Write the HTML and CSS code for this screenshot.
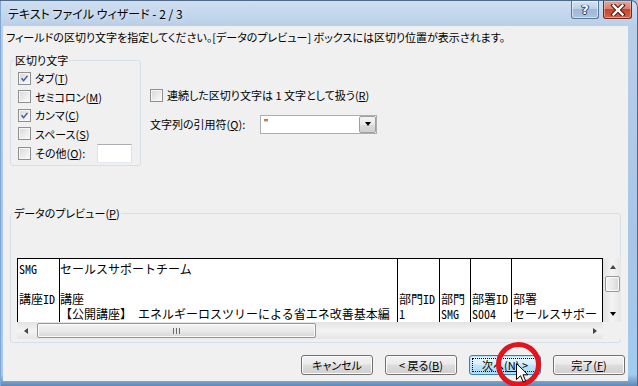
FILE: index.html
```html
<!DOCTYPE html>
<html lang="ja">
<head>
    <meta charset="UTF-8">
    <title>テキスト ファイル ウィザード - 2 / 3</title>
    <link rel="stylesheet" href="styles.css">
</head>
<body>
<div class="window">
    <div class="titlebar">
        <span class="title">テキスト ファイル ウィザード - 2 / 3</span>
        <div class="caption-buttons">
            <span class="cap-btn help">?</span>
            <span class="cap-btn close">
                <svg width="16" height="12" viewBox="0 0 16 12">
                    <path d="M3.5 1.5 L12.5 10.5 M12.5 1.5 L3.5 10.5" stroke="#4a1a12" stroke-width="4.4" stroke-linecap="square" fill="none"/>
                    <path d="M3.5 1.5 L12.5 10.5 M12.5 1.5 L3.5 10.5" stroke="#fff" stroke-width="2.4" stroke-linecap="square" fill="none"/>
                </svg>
            </span>
        </div>
    </div>

    <div class="client">
        <p class="intro">フィールドの区切り文字を指定してください。[データのプレビュー] ボックスには区切り位置が表示されます。</p>

        <div class="upper">
            <fieldset class="group delims">
                <legend>区切り文字</legend>
                <label class="check-row"><span class="check on"><svg viewBox="0 0 13 13"><path d="M3 6.3 L5.4 9 L10 3.4" stroke="#3d58a0" stroke-width="1.7" fill="none"/></svg></span>タブ(<u>T</u>)</label>
                <label class="check-row"><span class="check"></span>セミコロン(<u>M</u>)</label>
                <label class="check-row"><span class="check on"><svg viewBox="0 0 13 13"><path d="M3 6.3 L5.4 9 L10 3.4" stroke="#3d58a0" stroke-width="1.7" fill="none"/></svg></span>カンマ(<u>C</u>)</label>
                <label class="check-row"><span class="check"></span>スペース(<u>S</u>)</label>
                <label class="check-row other"><span class="check"></span>その他(<u>O</u>):<span class="textbox"></span></label>
            </fieldset>

            <div class="options">
                <label class="check-row"><span class="check"></span>連続した区切り文字は 1 文字として扱う(<u>R</u>)</label>
                <div class="quote-row">
                    <span class="quote-label">文字列の引用符(<u>Q</u>):</span>
                    <span class="combo">
                        <span class="combo-value">"</span>
                        <span class="combo-drop"><span class="tri-down"></span></span>
                    </span>
                </div>
            </div>
        </div>

        <fieldset class="group preview">
            <legend>データのプレビュー(<u>P</u>)</legend>
            <div class="preview-box">
                <div class="data-wrap">
                    <div class="data">
                        <div class="col c1"><div>SMG</div><div></div><div>講座ID</div><div></div></div>
                        <div class="col c2"><div>セールスサポートチーム</div><div></div><div>講座</div><div>【公開講座】　エネルギーロスツリーによる省エネ改善基本編</div></div>
                        <div class="col c3"><div></div><div></div><div>部門ID</div><div>1</div></div>
                        <div class="col c4"><div></div><div></div><div>部門</div><div>SMG</div></div>
                        <div class="col c5"><div></div><div></div><div>部署ID</div><div>S004</div></div>
                        <div class="col c6"><div></div><div></div><div>部署</div><div>セールスサポー</div></div>
                    </div>
                    <div class="vscroll">
                        <span class="sb-btn"><span class="tri-up"></span></span>
                        <span class="vthumb"></span>
                        <span class="sb-track"></span>
                        <span class="sb-btn"><span class="tri-down"></span></span>
                    </div>
                </div>
                <div class="hscroll-row">
                    <div class="hscroll">
                        <span class="sb-btn"><span class="tri-left"></span></span>
                        <span class="hthumb"><span class="grip"></span></span>
                        <span class="sb-track"></span>
                        <span class="sb-btn"><span class="tri-right"></span></span>
                    </div>
                    <div class="corner"></div>
                </div>
            </div>
        </fieldset>

        <div class="buttons">
            <span class="btn">キャンセル</span>
            <span class="btn">&lt; 戻る(<u>B</u>)</span>
            <span class="btn default"><span class="focus">次へ(<u>N</u>) &gt;</span></span>
            <span class="btn">完了(<u>F</u>)</span>
        </div>
    </div>

    <div class="highlight"></div>
    <svg class="cursor" width="13" height="20" viewBox="0 0 13 20">
        <path d="M0.5 0.5 L0.5 16.5 L4.5 12.7 L7.2 18.8 L9.6 17.8 L7 11.8 L12 11.8 Z" fill="#fff" stroke="#000" stroke-width="1" stroke-linejoin="miter"/>
    </svg>
</div>
</body>
</html>
```

FILE: styles.css
```css
* {
    box-sizing: border-box;
}
html, body {
    margin: 0;
    padding: 0;
}
body {
    width: 638px;
    height: 386px;
    overflow: hidden;
    font-family: "Noto Sans CJK JP", "Noto Sans", sans-serif;
    font-size: 11px;
    font-feature-settings: "palt";
    color: #000;
    background: #a9c4e3;
}
u {
    text-decoration: underline;
    text-underline-offset: 1px;
}

/* window frame */
.window {
    position: relative;
    width: 638px;
    height: 386px;
    display: flex;
    flex-direction: column;
    padding: 0 10px 5px 3px;
    border-top: 1px solid #4e6a8a;
    border-right: 1px solid #4e6a8a;
    border-top-right-radius: 7px;
    background: linear-gradient(to bottom, #cfdef0 0, #b9cfe8 25px, #a9c5e6 60%, #a2cbee 97%, #5e88b4 100%);
    box-shadow: inset 1px 0 0 #7fa5d3;
}
.titlebar {
    height: 25px;
    display: flex;
    align-items: flex-start;
}
.title {
    padding: 5px 0 0 5px;
    line-height: 16px;
    font-size: 12px;
    text-shadow: 0 0 6px rgba(255, 255, 255, 0.8);
}
.caption-buttons {
    margin-left: auto;
    margin-right: -5px;
    display: flex;
    gap: 4px;
}
.cap-btn {
    height: 18px;
    display: flex;
    align-items: center;
    justify-content: center;
    border: 1px solid #5b7594;
    border-top: none;
    border-radius: 0 0 3px 3px;
}
.help {
    width: 28px;
    background: linear-gradient(to bottom, #d7e4f2 0%, #bcd0e6 45%, #9fb8d6 50%, #a9c3e0 100%);
    box-shadow: inset 0 0 0 1px rgba(255, 255, 255, 0.5);
    color: #fff;
    font-family: "DejaVu Sans", sans-serif;
    font-weight: bold;
    font-size: 13px;
    text-shadow: 0 0 1px #233b5a, 1px 0 0 #233b5a, -1px 0 0 #233b5a, 0 1px 0 #233b5a;
}
.close {
    width: 29px;
    border-color: #6d2a20;
    background: linear-gradient(to bottom, #e7a596 0%, #d9806d 45%, #c4452e 50%, #d3644a 100%);
    box-shadow: inset 0 0 0 1px rgba(255, 220, 210, 0.45);
}

/* client area */
.client {
    flex: 1;
    display: flex;
    flex-direction: column;
    background: #f0f0f0;
    padding: 0 2px 0 0;
    box-shadow: 1px 0 0 #eaf2fb;
}
.intro {
    margin: 0;
    padding: 4px 0 0 3px;
    line-height: 14px;
    white-space: nowrap;
}
.upper {
    display: flex;
    margin: 9px 0 0 7px;
}

.group {
    margin: 0;
    border: 1px solid #d5dfe5;
    border-radius: 3px;
    min-width: 0;
}
.group legend {
    padding: 0 1px;
    margin-left: -4px;
    line-height: 14px;
}
.delims {
    width: 131px;
    padding: 2px 8px 2px 7px;
}
.check-row {
    display: flex;
    align-items: center;
    height: 18.5px;
    white-space: nowrap;
}
.check-row.other {
    height: 20px;
}
.check {
    flex: none;
    width: 13px;
    height: 13px;
    margin-right: 4px;
    border: 1px solid #8e8f8f;
    background: linear-gradient(135deg, #d6d6d6 0%, #ececec 55%, #fbfbfb 100%);
    box-shadow: inset 0 0 0 1px #f6f6f6;
}
.check svg {
    display: block;
    width: 11px;
    height: 11px;
}
.textbox {
    margin-left: auto;
    width: 35px;
    height: 19px;
    background: #fff;
    border: 1px solid #abadb3;
    border-color: #abadb3 #dbdfe6 #e3e9ef #e2e3ea;
}

.options {
    margin: 33px 0 0 9px;
}
.quote-row {
    display: flex;
    align-items: center;
    margin-top: 10px;
    height: 19px;
}
.quote-label {
    width: 110px;
}
.combo {
    width: 117px;
    height: 19px;
    display: flex;
    background: #fff;
    border: 1px solid #abadb3;
}
.combo-value {
    flex: 1;
    padding-left: 3px;
    line-height: 14px;
    font-family: "Liberation Sans", sans-serif;
    font-size: 11px;
}
.combo-drop {
    width: 17px;
    display: flex;
    align-items: center;
    justify-content: center;
    border: 1px solid #a0a0a0;
    border-radius: 2px;
    background: linear-gradient(to bottom, #f4f4f4 0%, #e8e8e8 50%, #dcdcdc 51%, #d0d0d0 100%);
}

.tri-down, .tri-up, .tri-left, .tri-right {
    width: 0;
    height: 0;
    border-style: solid;
    border-color: transparent;
}
.tri-down {
    border-width: 4px 3.5px 0 3.5px;
    border-top-color: #000;
}
.tri-up {
    border-width: 0 3.5px 4px 3.5px;
    border-bottom-color: #444;
}
.tri-left {
    border-width: 3.5px 4px 3.5px 0;
    border-right-color: #444;
}
.tri-right {
    border-width: 3.5px 0 3.5px 4px;
    border-left-color: #444;
}

/* preview */
.preview {
    margin: 40px 4px 0 7px;
    padding: 38px 2px 3px 6px;
}
.preview-box {
    width: 604px;
    display: flex;
    flex-direction: column;
}
.data-wrap {
    display: flex;
    height: 64px;
}
.data {
    width: 586px;
    display: flex;
    padding-top: 2px;
    background: #fff;
    border: 1px solid #000;
    border-bottom: none;
    overflow: hidden;
    font-size: 12px;
    font-feature-settings: "hwid";
    line-height: 15px;
    white-space: nowrap;
}
.col {
    flex: none;
    border-right: 1px solid #000;
    margin-top: -2px;
    padding-top: 2px;
}
.col div {
    height: 15px;
    padding-left: 1px;
}
.c1 { width: 42px; }
.c2 { width: 338px; }
.c2 div { padding-left: 0; }
.c3 { width: 42px; }
.c4 { width: 31px; }
.c5 { width: 41px; }
.c6 { flex: 1; border-right: none; }

.vscroll {
    width: 18px;
    display: flex;
    flex-direction: column;
    background: linear-gradient(to right, #e3e3e3, #f3f3f3 50%, #e6e6e6);
    padding-left: 1px;
}
.sb-btn {
    flex: none;
    width: 17px;
    height: 17px;
    display: flex;
    align-items: center;
    justify-content: center;
}
.sb-track {
    flex: 1;
}
.vthumb {
    flex: none;
    height: 16px;
    margin: 1px 1px 0 1px;
    border: 1px solid #979797;
    border-radius: 2px;
    background: linear-gradient(to right, #f3f3f3 0%, #e9e9e9 50%, #d6d6d6 100%);
    box-shadow: inset 0 0 0 1px #fafafa;
}
.hscroll-row {
    display: flex;
    height: 17px;
}
.hscroll {
    width: 586px;
    display: flex;
    background: linear-gradient(to bottom, #e3e3e3, #f3f3f3 50%, #e6e6e6);
}
.hthumb {
    flex: none;
    width: 279px;
    margin: 1px 0 1px 3px;
    display: flex;
    align-items: center;
    justify-content: center;
    border: 1px solid #979797;
    border-radius: 2px;
    background: linear-gradient(to bottom, #f3f3f3 0%, #e9e9e9 50%, #d6d6d6 100%);
    box-shadow: inset 0 0 0 1px #fafafa;
}
.grip {
    width: 7px;
    height: 6px;
    background: repeating-linear-gradient(to right, #6a6a6a 0 1px, #e8e8e8 1px 3px);
}
.corner {
    flex: 1;
    background: #f0f0f0;
}

/* buttons */
.buttons {
    display: flex;
    justify-content: flex-end;
    gap: 12px;
    margin-top: 12px;
}
.btn {
    width: 72px;
    height: 20px;
    display: flex;
    align-items: center;
    justify-content: center;
    border: 1px solid #707070;
    border-radius: 3px;
    background: linear-gradient(to bottom, #f2f2f2 0%, #ebebeb 45%, #dddddd 50%, #cfcfcf 100%);
    box-shadow: inset 0 0 0 1px #fcfcfc;
    line-height: 14px;
}
.btn.default {
    padding: 2px;
    border-color: #3c7fb1;
    background: linear-gradient(to bottom, #eaf6fd 0%, #d9f0fc 45%, #bee6fd 50%, #a7d9f5 100%);
    box-shadow: inset 0 0 0 1px #b7e3fa;
}
.focus {
    flex: 1;
    align-self: stretch;
    display: flex;
    align-items: center;
    justify-content: center;
    border: 1px dotted #000;
}

/* annotation drawn over the screenshot */
.highlight {
    position: absolute;
    left: 496px;
    top: 341px;
    width: 45px;
    height: 45px;
    border: 5px solid #e3141c;
    border-radius: 50%;
}
.cursor {
    position: absolute;
    left: 516px;
    top: 362px;
}
```
